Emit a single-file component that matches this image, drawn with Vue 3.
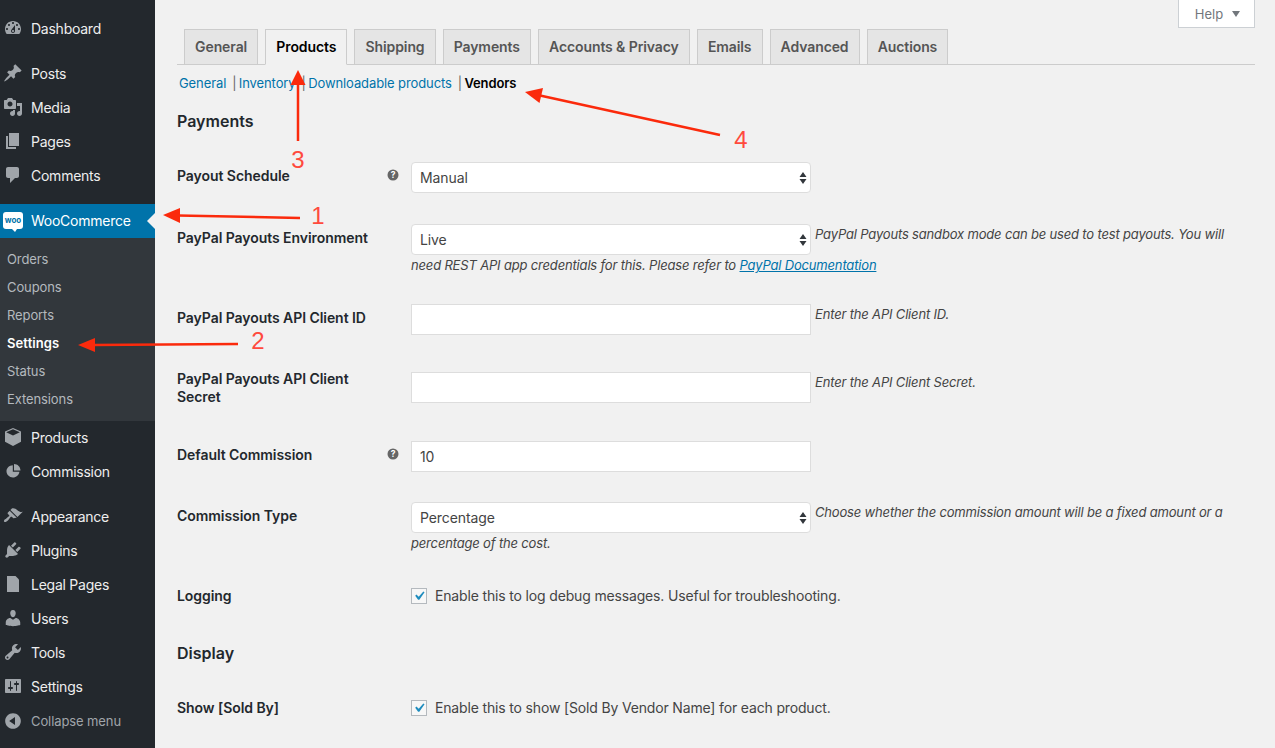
<script setup>
const topGroups = [
  [{ n: 'Dashboard', d: 'M3.76 16h12.48c1.1-1.37 1.76-3.11 1.76-5 0-4.42-3.58-8-8-8s-8 3.58-8 8c0 1.89.66 3.63 1.76 5zM10 4c.55 0 1 .45 1 1s-.45 1-1 1-1-.45-1-1 .45-1 1-1zM6 6c.55 0 1 .45 1 1s-.45 1-1 1-1-.45-1-1 .45-1 1-1zm8 0c.55 0 1 .45 1 1s-.45 1-1 1-1-.45-1-1 .45-1 1-1zm-5.37 5.55L12 7v6c0 1.1-.9 2-2 2s-2-.9-2-2c0-.57.24-1.08.63-1.45zM4 10c.55 0 1 .45 1 1s-.45 1-1 1-1-.45-1-1 .45-1 1-1zm12 0c.55 0 1 .45 1 1s-.45 1-1 1-1-.45-1-1 .45-1 1-1zm-5 3c0-.55-.45-1-1-1s-1 .45-1 1 .45 1 1 1 1-.45 1-1z' }],
  [
    { n: 'Posts', d: 'M10.44 3.02l1.82-1.82 6.36 6.35-1.83 1.82c-1.05-.68-2.48-.57-3.41.36l-.75.75c-.92.93-1.04 2.35-.35 3.41l-1.83 1.82-2.41-2.41-2.8 2.79c-.42.42-3.38 2.71-3.8 2.29s1.86-3.39 2.28-3.81l2.79-2.79L4.1 9.36l1.83-1.82c1.05.69 2.48.57 3.4-.36l.75-.75c.93-.92 1.05-2.35.36-3.41z' },
    { n: 'Media', d: 'M13 11V4c0-.55-.45-1-1-1h-1.67L9 1H5L3.67 3H2c-.55 0-1 .45-1 1v7c0 .55.45 1 1 1h10c.55 0 1-.45 1-1zM7 4.5c1.38 0 2.5 1.12 2.5 2.5S8.38 9.5 7 9.5 4.5 8.38 4.5 7 5.62 4.5 7 4.5zM14 6h5v10.5c0 1.38-1.12 2.5-2.5 2.5S14 17.88 14 16.5s1.12-2.5 2.5-2.5c.17 0 .34.02.5.05V9h-3V6zm-4 8.05V13h2v3.5c0 1.38-1.12 2.5-2.5 2.5S7 17.88 7 16.5 8.12 14 9.5 14c.17 0 .34.02.5.05z' },
    { n: 'Pages', d: 'M6 15V2h10v13H6zm-1 1h8v2H3V5h2v11z' },
    { n: 'Comments', d: 'M5 2h9c1.1 0 2 .9 2 2v7c0 1.1-.9 2-2 2h-2l-5 5v-5H5c-1.1 0-2-.9-2-2V4c0-1.1.9-2 2-2z' }
  ]
]
const subItems = ['Orders', 'Coupons', 'Reports', 'Settings', 'Status', 'Extensions']
const midItems = [
  { n: 'Products', d: 'M10 1l8 3.4v10.4L10 19l-8-4.2V4.4L10 1zM3.2 5.2L10 8.6l6.8-3.4L10 2.3 3.2 5.2z' },
  { n: 'Commission', d: 'M11 9.5V3c3.6 0 6.5 2.9 6.5 6.5H11zM9.8 4.3v6.4h6.6c-.3 3.2-3.1 5.8-6.5 5.8-3.6 0-6.4-2.9-6.4-6.2 0-3.2 2.8-6 6.3-6z' }
]
const lowItems = [
  { n: 'Appearance', d: 'M14.48 11.06L7.41 3.99l1.5-1.5c.5-.56 2.3-.47 3.51.32 1.21.8 1.43 1.28 2.91 2.1 1.18.64 2.45 1.26 4.45.85zm-.71.71L6.7 4.7 4.93 6.47c-.39.39-.39 1.02 0 1.41l1.06 1.06c.39.39.39 1.03 0 1.42-.6.6-1.43 1.11-2.21 1.69-.35.26-.7.53-1.01.84C1.43 13.23.4 14.89 1.25 15.74c.84.84 2.5-.18 3.84-1.52.3-.31.58-.66.84-1.01.57-.78 1.08-1.61 1.69-2.21.39-.39 1.02-.39 1.41 0l1.06 1.06c.39.39 1.02.39 1.41 0z' },
  { n: 'Plugins', d: 'M13.11 4.36L9.87 7.6 8 5.73l3.24-3.24c.35-.34 1.05-.2 1.56.32.52.51.66 1.21.31 1.55zm-8 1.77l.91-1.12 9.01 9.01-1.19.84c-.71.71-2.63 1.16-3.82 1.16H6.14L4.9 17.26c-.59.59-1.54.59-2.12 0-.59-.58-.59-1.53 0-2.12l1.24-1.24v-3.88c0-1.13.4-3.19 1.09-3.89zm7.26 3.97l3.24-3.24c.34-.35 1.04-.21 1.55.31.52.51.66 1.21.31 1.55l-3.24 3.25z' },
  { n: 'Legal Pages', d: 'M4 2h8.5L16 5.5V18H4V2z' },
  { n: 'Users', d: 'M10 9.25c-2.27 0-2.73-3.44-2.73-3.44C7 4.02 7.82 2 9.97 2c2.16 0 2.98 2.02 2.71 3.81 0 0-.41 3.44-2.68 3.44zm0 2.57L12.72 10c2.39 0 4.52 2.33 4.52 4.53v2.49s-3.65 1.13-7.24 1.13c-3.65 0-7.24-1.13-7.24-1.13v-2.49c0-2.25 1.94-4.48 4.47-4.48z' },
  { n: 'Tools', d: 'M16.68 9.77c-1.34 1.34-3.3 1.67-4.95.99l-5.41 6.52c-.99.99-2.59.99-3.58 0s-.99-2.59 0-3.57l6.52-5.42c-.68-1.65-.35-3.61.99-4.95 1.28-1.28 3.12-1.62 4.72-1.06l-2.89 2.89 2.82 2.82 2.86-2.87c.53 1.58.18 3.39-1.08 4.65zM3.81 16.21c.4.39 1.04.39 1.43 0 .4-.4.4-1.04 0-1.43-.39-.4-1.03-.4-1.43 0-.39.39-.39 1.03 0 1.43z' },
  { n: 'Settings', d: 'M18 16V4c0-.55-.45-1-1-1H3c-.55 0-1 .45-1 1v12c0 .55.45 1 1 1h14c.55 0 1-.45 1-1zM8 11h1c.55 0 1 .45 1 1s-.45 1-1 1H8v1.5c0 .28-.22.5-.5.5s-.5-.22-.5-.5V13H6c-.55 0-1-.45-1-1s.45-1 1-1h1V5.5c0-.28.22-.5.5-.5s.5.22.5.5V11zm5-2h-1c-.55 0-1-.45-1-1s.45-1 1-1h1V5.5c0-.28.22-.5.5-.5s.5.22.5.5V7h1c.55 0 1 .45 1 1s-.45 1-1 1h-1v5.5c0 .28-.22.5-.5.5s-.5-.22-.5-.5V9z' }
]
const tabs = ['General', 'Products', 'Shipping', 'Payments', 'Accounts & Privacy', 'Emails', 'Advanced', 'Auctions']
const rows = [
  { label: 'Payout Schedule', type: 'select', value: 'Manual', help: true, h: 62, top: 20 },
  { label: 'PayPal Payouts Environment', type: 'select', value: 'Live', h: 80, top: 20, desc: 'PayPal Payouts sandbox mode can be used to test payouts. You will need REST API app credentials for this. Please refer to ', link: 'PayPal Documentation' },
  { label: 'PayPal Payouts API Client ID', type: 'input', value: '', h: 68, top: 20, desc: 'Enter the API Client ID.' },
  { label: 'PayPal Payouts API Client Secret', type: 'input', value: '', h: 69, top: 13, desc: 'Enter the API Client Secret.' },
  { label: 'Default Commission', type: 'input', value: '10', help: true, h: 61, top: 20 },
  { label: 'Commission Type', type: 'select', value: 'Percentage', h: 86, top: 20, desc: 'Choose whether the commission amount will be a fixed amount or a percentage of the cost.' },
  { label: 'Logging', type: 'check', desc: 'Enable this to log debug messages. Useful for troubleshooting.', h: 61, top: 14 }
]
</script>

<template>
  <div class="page">
    <aside class="side">
      <div class="group first">
        <a v-for="i in topGroups[0]" :key="i.n" class="item">
          <svg class="ico" viewBox="0 0 20 20"><path :d="i.d" fill-rule="evenodd" /></svg>{{ i.n }}
        </a>
      </div>
      <div class="group">
        <a v-for="i in topGroups[1]" :key="i.n" class="item">
          <svg class="ico" viewBox="0 0 20 20"><path :d="i.d" fill-rule="evenodd" /></svg>{{ i.n }}
        </a>
      </div>
      <a class="item active">
        <span class="woo"><span class="woo-t">woo</span></span>WooCommerce
      </a>
      <div class="sub">
        <a v-for="s in subItems" :key="s" class="subitem" :class="{ cur: s === 'Settings' }">{{ s }}</a>
      </div>
      <div class="group">
        <a v-for="i in midItems" :key="i.n" class="item">
          <svg class="ico" viewBox="0 0 20 20"><path :d="i.d" fill-rule="evenodd" /></svg>{{ i.n }}
        </a>
      </div>
      <div class="group">
        <a v-for="i in lowItems" :key="i.n" class="item">
          <svg class="ico" viewBox="0 0 20 20"><path :d="i.d" fill-rule="evenodd" /></svg>{{ i.n }}
        </a>
      </div>
      <a class="collapse">
        <svg class="ico" viewBox="0 0 20 20"><path d="M10 2.16c4.33 0 7.84 3.51 7.84 7.84s-3.51 7.84-7.84 7.84S2.16 14.33 2.16 10 5.71 2.16 10 2.16zm2 11.72V6.12L6.18 9.97z" fill-rule="evenodd" /></svg>Collapse menu
      </a>
    </aside>

    <main class="main">
      <div class="helpbar">
        <div class="helptab">Help<span class="caret"></span></div>
      </div>
      <nav class="tabs">
        <a v-for="t in tabs" :key="t" class="tab" :class="{ on: t === 'Products' }">{{ t }}</a>
      </nav>
      <div class="subnav">
        <a class="lnk">General</a><span class="sep">|</span>
        <a class="lnk">Inventory</a><span class="sep">|</span>
        <a class="lnk">Downloadable products</a><span class="sep">|</span>
        <b class="curlink">Vendors</b>
      </div>
      <h2 class="h2 pay">Payments</h2>
      <div class="form">
        <div v-for="r in rows" :key="r.label" class="row" :style="{ minHeight: r.h + 'px' }">
          <div class="label" :style="{ paddingTop: r.top + 'px' }">
            <span>{{ r.label }}</span>
            <svg v-if="r.help" class="help" viewBox="0 0 12 12"><circle cx="6" cy="6" r="5.5" fill="#666" /><text x="6" y="9" text-anchor="middle" font-size="8.5" font-weight="700" fill="#fff">?</text></svg>
          </div>
          <div class="ctrl">
            <template v-if="r.type === 'check'">
              <span class="cb"><svg viewBox="0 0 20 20"><path d="M14.83 4.89l1.34.94-5.81 8.38H9.02L5.78 9.67l1.34-1.25 2.57 2.4z" /></svg></span><span class="cbtext">{{ r.desc }}</span>
            </template>
            <template v-else>
              <div v-if="r.type === 'select'" class="sel">
                {{ r.value }}
                <svg class="updown" viewBox="0 0 8 14"><path d="M4 1l3.5 5h-7zM4 13L.5 8h7z" /></svg>
              </div>
              <input v-else class="inp" :value="r.value" />
              <span v-if="r.desc" class="desc">{{ r.desc }}<a v-if="r.link" class="doc">{{ r.link }}</a></span>
            </template>
          </div>
        </div>
      </div>
      <h2 class="h2 disp">Display</h2>
      <div class="form">
        <div class="row">
          <div class="label chk-label"><span>Show [Sold By]</span></div>
          <div class="ctrl">
            <span class="cb"><svg viewBox="0 0 20 20"><path d="M14.83 4.89l1.34.94-5.81 8.38H9.02L5.78 9.67l1.34-1.25 2.57 2.4z" /></svg></span><span class="cbtext">Enable this to show [Sold By Vendor Name] for each product.</span>
          </div>
        </div>
      </div>
    </main>

    <svg class="notes" viewBox="0 0 1275 748">
      <g class="lines">
        <line x1="178" y1="215.5" x2="300" y2="218" />
        <line x1="92" y1="345" x2="238" y2="344" />
        <line x1="298" y1="82" x2="298" y2="141" />
        <line x1="540" y1="95.5" x2="720" y2="135" />
      </g>
      <g class="heads">
        <path d="M163 215l17-7v15z" />
        <path d="M78 345l17-7v14z" />
        <path d="M298 70l7.5 15h-15z" />
        <path d="M525 92l18-4-3.5 15z" />
      </g>
      <g class="digits">
        <text x="318" y="224">1</text>
        <text x="258" y="349">2</text>
        <text x="298" y="168">3</text>
        <text x="741" y="148">4</text>
      </g>
    </svg>
  </div>
</template>

<style>
html, body { margin: 0; background: #f1f1f1; overflow: hidden; }
</style>

<style scoped>
.page {
  position: relative;
  display: flex;
  width: 1275px;
  height: 748px;
  overflow: hidden;
  background: #f1f1f1;
  font-family: Inter, "Liberation Sans", sans-serif;
  color: #444;
}
.side {
  width: 155px;
  flex: none;
  background: #23282d;
  box-sizing: border-box;
  padding-top: 12px;
  color: #eee;
}
.group { margin-bottom: 11px; }
.item {
  display: flex;
  align-items: center;
  height: 34px;
  box-sizing: border-box;
  padding-bottom: 2px;
  font-size: 14px;
  letter-spacing: -.25px;
  color: #eee;
  position: relative;
}
.ico {
  width: 20px;
  height: 20px;
  margin: 0 8px 0 3px;
  fill: #a0a5aa;
  flex: none;
}
.active {
  background: #0073aa;
  color: #fff;
}
.active::after {
  content: "";
  position: absolute;
  right: 0;
  top: 9px;
  border: 8px solid transparent;
  border-left: 0;
  border-right-color: #f1f1f1;
}
.woo {
  width: 20px;
  height: 17px;
  margin: 0 8px 0 3px;
  background: #fff;
  border-radius: 3px;
  display: flex;
  align-items: center;
  justify-content: center;
  position: relative;
  flex: none;
}
.woo::after {
  content: "";
  position: absolute;
  left: 9px;
  bottom: -3px;
  border-top: 3px solid #fff;
  border-left: 3px solid transparent;
  border-right: 2px solid transparent;
}
.woo-t { font-size: 8px; font-weight: 700; letter-spacing: 0; color: #0073aa; line-height: 1; }
.sub {
  background: #32373c;
  padding: 7px 0 8px;
}
.subitem {
  display: flex;
  align-items: center;
  height: 28px;
  padding-left: 7px;
  font-size: 13px;
  letter-spacing: -.1px;
  color: #b4b9be;
}
.cur { color: #fff; font-weight: 600; letter-spacing: .1px; }
.collapse {
  display: flex;
  align-items: center;
  height: 33px;
  margin-top: -11px;
  font-size: 13px;
  letter-spacing: -.1px;
  color: #a0a5aa;
}

.main {
  flex: 1;
  min-width: 0;
  padding: 0 20px 0 22px;
}
.helpbar {
  display: flex;
  justify-content: flex-end;
  height: 29px;
}
.helptab {
  width: 77px;
  height: 28px;
  box-sizing: border-box;
  background: #fff;
  border: 1px solid #ccd0d4;
  border-top: 0;
  padding-left: 2px;
  display: flex;
  align-items: center;
  justify-content: center;
  font-size: 13px;
  color: #72777c;
}
.caret {
  margin-left: 9px;
  border-top: 6px solid #72777c;
  border-left: 4.5px solid transparent;
  border-right: 4.5px solid transparent;
}
.tabs {
  display: flex;
  gap: 7px;
  padding-left: 7px;
  height: 36px;
  box-sizing: border-box;
  border-bottom: 1px solid #ccc;
}
.tab {
  height: 36px;
  box-sizing: border-box;
  padding: 0 10.1px;
  border: 1px solid #ccc;
  background: #e5e5e5;
  color: #555;
  font-size: 14px;
  font-weight: 600;
  line-height: 34px;
  letter-spacing: -.1px;
}
.tab.on {
  background: #f1f1f1;
  color: #000;
  border-bottom-color: #f1f1f1;
}
.subnav {
  margin-top: 9px;
  padding-left: 2px;
  height: 18px;
  line-height: 18px;
  font-size: 13px;
  letter-spacing: -.1px;
  display: flex;
  align-items: center;
  white-space: nowrap;
}
.lnk { color: #0073aa; }
.sep { margin: 0 2.4px 0 6px; color: #666; }
.curlink { color: #000; font-weight: 600; }
.h2 {
  margin: 0;
  font-size: 16px;
  line-height: 18px;
  font-weight: 600;
  color: #23282d;
}
.pay { margin-top: 20px; margin-bottom: 17px; }
.disp { margin-top: 10px; margin-bottom: 23px; }
.row {
  display: flex;
  box-sizing: border-box;
}
.label {
  width: 234px;
  flex: none;
  box-sizing: border-box;
  padding: 20px 30px 0 0;
  font-size: 14px;
  line-height: 18px;
  font-weight: 600;
  letter-spacing: -.06px;
  color: #23282d;
  position: relative;
}
.chk-label { padding-top: 14px; }
.help {
  position: absolute;
  right: 12px;
  top: 22px;
  width: 12px;
  height: 12px;
}
.help text { font-family: Inter, sans-serif; }
.ctrl {
  flex: 1;
  min-width: 0;
  padding-top: 15px;
  padding-right: 16px;
  font-size: 14px;
}
.sel, .inp {
  display: inline-block;
  vertical-align: top;
  box-sizing: border-box;
  width: 400px;
  background: #fff;
  color: #444;
  font: 14px/29px Inter, "Liberation Sans", sans-serif;
  letter-spacing: -.1px;
  padding: 0 8px;
  margin: 0;
  outline: 0;
}
.sel {
  height: 31px;
  border: 1px solid #ddd;
  border-radius: 4px;
  position: relative;
}
.inp {
  height: 31px;
  border: 1px solid #ddd;
}
.updown {
  position: absolute;
  right: 3px;
  top: 8px;
  width: 8px;
  height: 14px;
  fill: #32373c;
}
.desc {
  font-size: 13px;
  line-height: 20px;
  letter-spacing: -.17px;
  font-style: italic;
  color: #444;
  margin-left: 4px;
}
.doc { color: #0073aa; text-decoration: underline; }
.cb {
  display: inline-block;
  vertical-align: top;
  width: 16px;
  height: 16px;
  box-sizing: border-box;
  border: 1px solid #b4b9be;
  background: #f7f7f7;
  margin-right: 8px;
}
.cb svg {
  display: block;
  width: 18px;
  height: 18px;
  margin: -2px 0 0 -2px;
  fill: #1e8cbe;
}
.cbtext { font-size: 14px; line-height: 16px; letter-spacing: -.16px; vertical-align: top; color: #444; }

.notes {
  position: absolute;
  left: 0;
  top: 0;
  width: 1275px;
  height: 748px;
  pointer-events: none;
}
.lines line { stroke: #fb2a0c; stroke-width: 2.5; }
.heads path { fill: #fb2a0c; }
.digits text {
  font-family: "Liberation Sans", sans-serif;
  font-size: 24px;
  fill: #ff4a3d;
  text-anchor: middle;
}
</style>
